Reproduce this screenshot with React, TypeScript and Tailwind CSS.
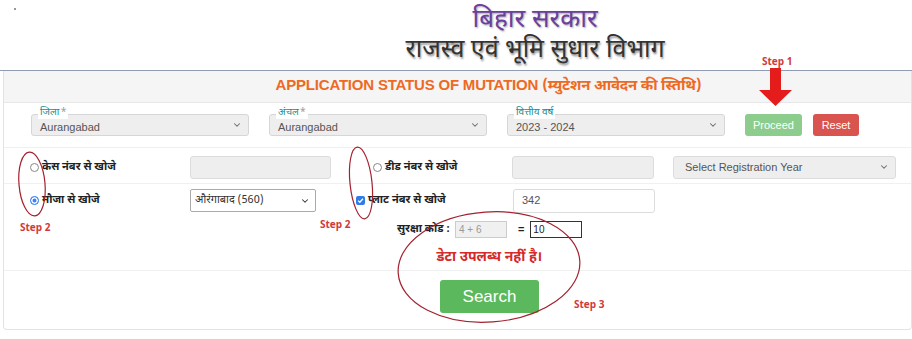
import { ChevronDown } from "lucide-react";

const hindi = "font-['Noto_Sans_Devanagari','Lohit_Devanagari','Noto_Sans',sans-serif]";
const arial = "font-['Liberation_Sans',Arial,sans-serif]";

function FloatSelect({ label, value, star = true }: { label: string; value: string; star?: boolean }) {
  return (
    <div className="relative w-[218px] h-[22px] rounded-[3px] border border-[#d6d6d6] bg-[#eeeeee] flex items-center justify-between pl-[8px] pr-[6px]">
      <span className={`absolute left-[6px] -top-[8px] bg-white px-[2px] leading-[12px] text-[10px] text-[#1a8a8a] ${hindi}`}>
        {label}
        {star && <span className="text-[#999] ml-[1px]">*</span>}
      </span>
      <span className={`text-[11px] text-[#555] mt-[4px] ${arial}`}>{value}</span>
      <ChevronDown className="w-[10px] h-[10px] text-[#666]" strokeWidth={2.5} />
    </div>
  );
}

function Radio({ checked }: { checked?: boolean }) {
  return (
    <span className={`inline-block w-[9px] h-[9px] rounded-full border ${checked ? "border-[#3b82f6] bg-[#3b82f6] ring-[1.5px] ring-inset ring-white" : "border-[#888] bg-white"}`} />
  );
}

export default function App() {
  return (
    <div className={`relative w-[912px] h-[339px] bg-white overflow-hidden ${arial}`}>
      {/* header */}
      <div className="h-[71px] border-b border-[#8f9cb3] relative">
        <span className="absolute left-[14px] top-[8px] w-[2px] h-[2px] bg-[#999]" />
        <div className={`flex flex-col items-center pl-[158px] ${hindi}`}>
          <div className="text-[26px] leading-[30px] text-[#6b3fa0] mt-[6px] [text-shadow:1px_1px_2px_rgba(0,0,0,0.35)]">बिहार सरकार</div>
          <div className="text-[25px] leading-[30px] text-[#333] [text-shadow:1px_2px_2px_rgba(0,0,0,0.4)]">राजस्व एवं भूमि सुधार विभाग</div>
        </div>
      </div>

      {/* panel */}
      <div className="ml-[3px] h-[259px] border-x border-b border-[#e3e3e3] rounded-b-[4px]">
        <div className="h-[32px] bg-[#f5f5f5] border-b border-[#e8e8e8] flex items-center justify-center pl-[62px]">
          <span className={`text-[15px] font-bold text-[#ee6a22] tracking-[-0.2px] ${arial}`}>
            APPLICATION STATUS OF MUTATION <span className={hindi}>(म्युटेशन आवेदन की स्तिथि)</span>
          </span>
        </div>

        {/* row 1 */}
        <div className="h-[45px] border-b border-[#f0f0f0] flex items-center pl-[27px] gap-[20px]">
          <FloatSelect label="जिला" value="Aurangabad" />
          <FloatSelect label="अंचल" value="Aurangabad" />
          <FloatSelect label="वित्तीय वर्ष" value="2023 - 2024" star={false} />
          <div className="flex gap-[11px]">
            <button className="h-[22px] w-[57px] rounded-[3px] bg-[#8ccc8c] text-white text-[11px]">Proceed</button>
            <button className="h-[22px] w-[46px] rounded-[3px] bg-[#d9534f] text-white text-[11px]">Reset</button>
          </div>
        </div>

        {/* row 2 */}
        <div className="h-[36px] border-b border-[#f0f0f0] flex items-center pl-[26px] pt-[3px]">
          <div className={`w-[160px] flex items-center gap-[3px] text-[11px] font-bold text-[#222] ${hindi}`}>
            <Radio />
            <span>केस नंबर से खोजे</span>
          </div>
          <div className="w-[141px] h-[23px] rounded-[3px] border border-[#dcdcdc] bg-[#eeeeee]" />
          <div className={`ml-[31px] w-[150px] flex items-center gap-[3px] text-[11px] font-bold text-[#222] ${hindi}`}>
            <span className="w-[8px]" />
            <Radio />
            <span>डीड नंबर से खोजे</span>
          </div>
          <div className="w-[142px] h-[23px] rounded-[3px] border border-[#dcdcdc] bg-[#eeeeee]" />
          <div className="ml-[19px] w-[223px] h-[23px] rounded-[3px] border border-[#dcdcdc] bg-[#eeeeee] flex items-center justify-between pl-[11px] pr-[6px]">
            <span className="text-[11px] text-[#555]">Select Registration Year</span>
            <ChevronDown className="w-[10px] h-[10px] text-[#666]" strokeWidth={2.5} />
          </div>
        </div>

        {/* row 3 */}
        <div className="h-[33px] flex items-center pl-[26px]">
          <div className={`w-[160px] flex items-center gap-[3px] text-[11px] font-bold text-[#222] ${hindi}`}>
            <Radio checked />
            <span>मौजा से खोजे</span>
          </div>
          <div className="w-[126px] h-[23px] rounded-[2px] border border-[#aaa] bg-white flex items-center justify-between pl-[4px] pr-[5px]">
            <span className={`text-[11px] text-[#333] ${hindi}`}>औरंगाबाद (560)</span>
            <ChevronDown className="w-[10px] h-[10px] text-[#333]" strokeWidth={2.5} />
          </div>
          <div className={`ml-[40px] w-[157px] flex items-center gap-[3px] text-[11px] font-bold text-[#222] ${hindi}`}>
            <span className="w-[9px] h-[9px] rounded-[2px] bg-[#2f7be8] flex items-center justify-center">
              <svg viewBox="0 0 10 10" className="w-[7px] h-[7px]"><path d="M1.5 5.2 L4 7.5 L8.5 2.5" stroke="white" strokeWidth="1.8" fill="none" /></svg>
            </span>
            <span>प्लाट नंबर से खोजे</span>
          </div>
          <div className="w-[142px] h-[24px] rounded-[3px] border border-[#dcdcdc] bg-white flex items-center pl-[8px]">
            <span className="text-[11px] text-[#555]">342</span>
          </div>
        </div>

        {/* captcha */}
        <div className="h-[24px] flex items-center pl-[393px]">
          <span className={`text-[11px] font-bold text-[#222] ${hindi}`}>सुरक्षा कोड :</span>
          <div className="ml-[5px] w-[52px] h-[17px] border border-[#ccc] bg-[#f0f0f0] flex items-center pl-[3px]">
            <span className="text-[10px] text-[#999]">4 + 6</span>
          </div>
          <span className="ml-[11px] text-[11px] font-bold text-[#222]">=</span>
          <div className="ml-[6px] w-[52px] h-[17px] border border-[#333] bg-white flex items-center pl-[2px]">
            <span className="text-[10px] text-[#222]">10</span>
          </div>
        </div>

        {/* message */}
        <div className="h-[30px] border-b border-[#f0f0f0] flex items-center justify-center pl-[64px] pt-[4px]">
          <span className={`text-[14px] font-bold text-[#d42a2a] ${hindi}`}>डेटा उपलब्ध नहीं है।</span>
        </div>

        <div className="flex justify-center pt-[9px] pl-[64px]">
          <button className="w-[99px] h-[33px] rounded-[3px] bg-[#5cb85c] text-white text-[17px]">Search</button>
        </div>
      </div>

      {/* annotations */}
      <span className="absolute left-[762px] top-[54px] text-[10px] font-bold text-[#d03a3a] font-['Open_Sans',sans-serif]">Step 1</span>
      <span className="absolute left-[20px] top-[220px] text-[10px] font-bold text-[#d03a3a] font-['Open_Sans',sans-serif]">Step 2</span>
      <span className="absolute left-[320px] top-[217px] text-[10px] font-bold text-[#d03a3a] font-['Open_Sans',sans-serif]">Step 2</span>
      <span className="absolute left-[574px] top-[297px] text-[10px] font-bold text-[#d03a3a] font-['Open_Sans',sans-serif]">Step 3</span>
      <svg className="absolute left-0 top-0 pointer-events-none" width="912" height="339">
        <path d="M770 68 H781 V90 H792 L775.5 106 L759 90 H770 Z" fill="#e51c1c" />
        <ellipse cx="32" cy="184" rx="13" ry="32" fill="none" stroke="#a3222f" strokeWidth="1.2" transform="rotate(-5 32 184)" />
        <ellipse cx="361" cy="183" rx="11" ry="36" fill="none" stroke="#a3222f" strokeWidth="1.2" transform="rotate(-6 361 183)" />
        <ellipse cx="489" cy="267" rx="91" ry="55" fill="none" stroke="#a3222f" strokeWidth="1.2" transform="rotate(-4 489 267)" />
      </svg>
    </div>
  );
}
